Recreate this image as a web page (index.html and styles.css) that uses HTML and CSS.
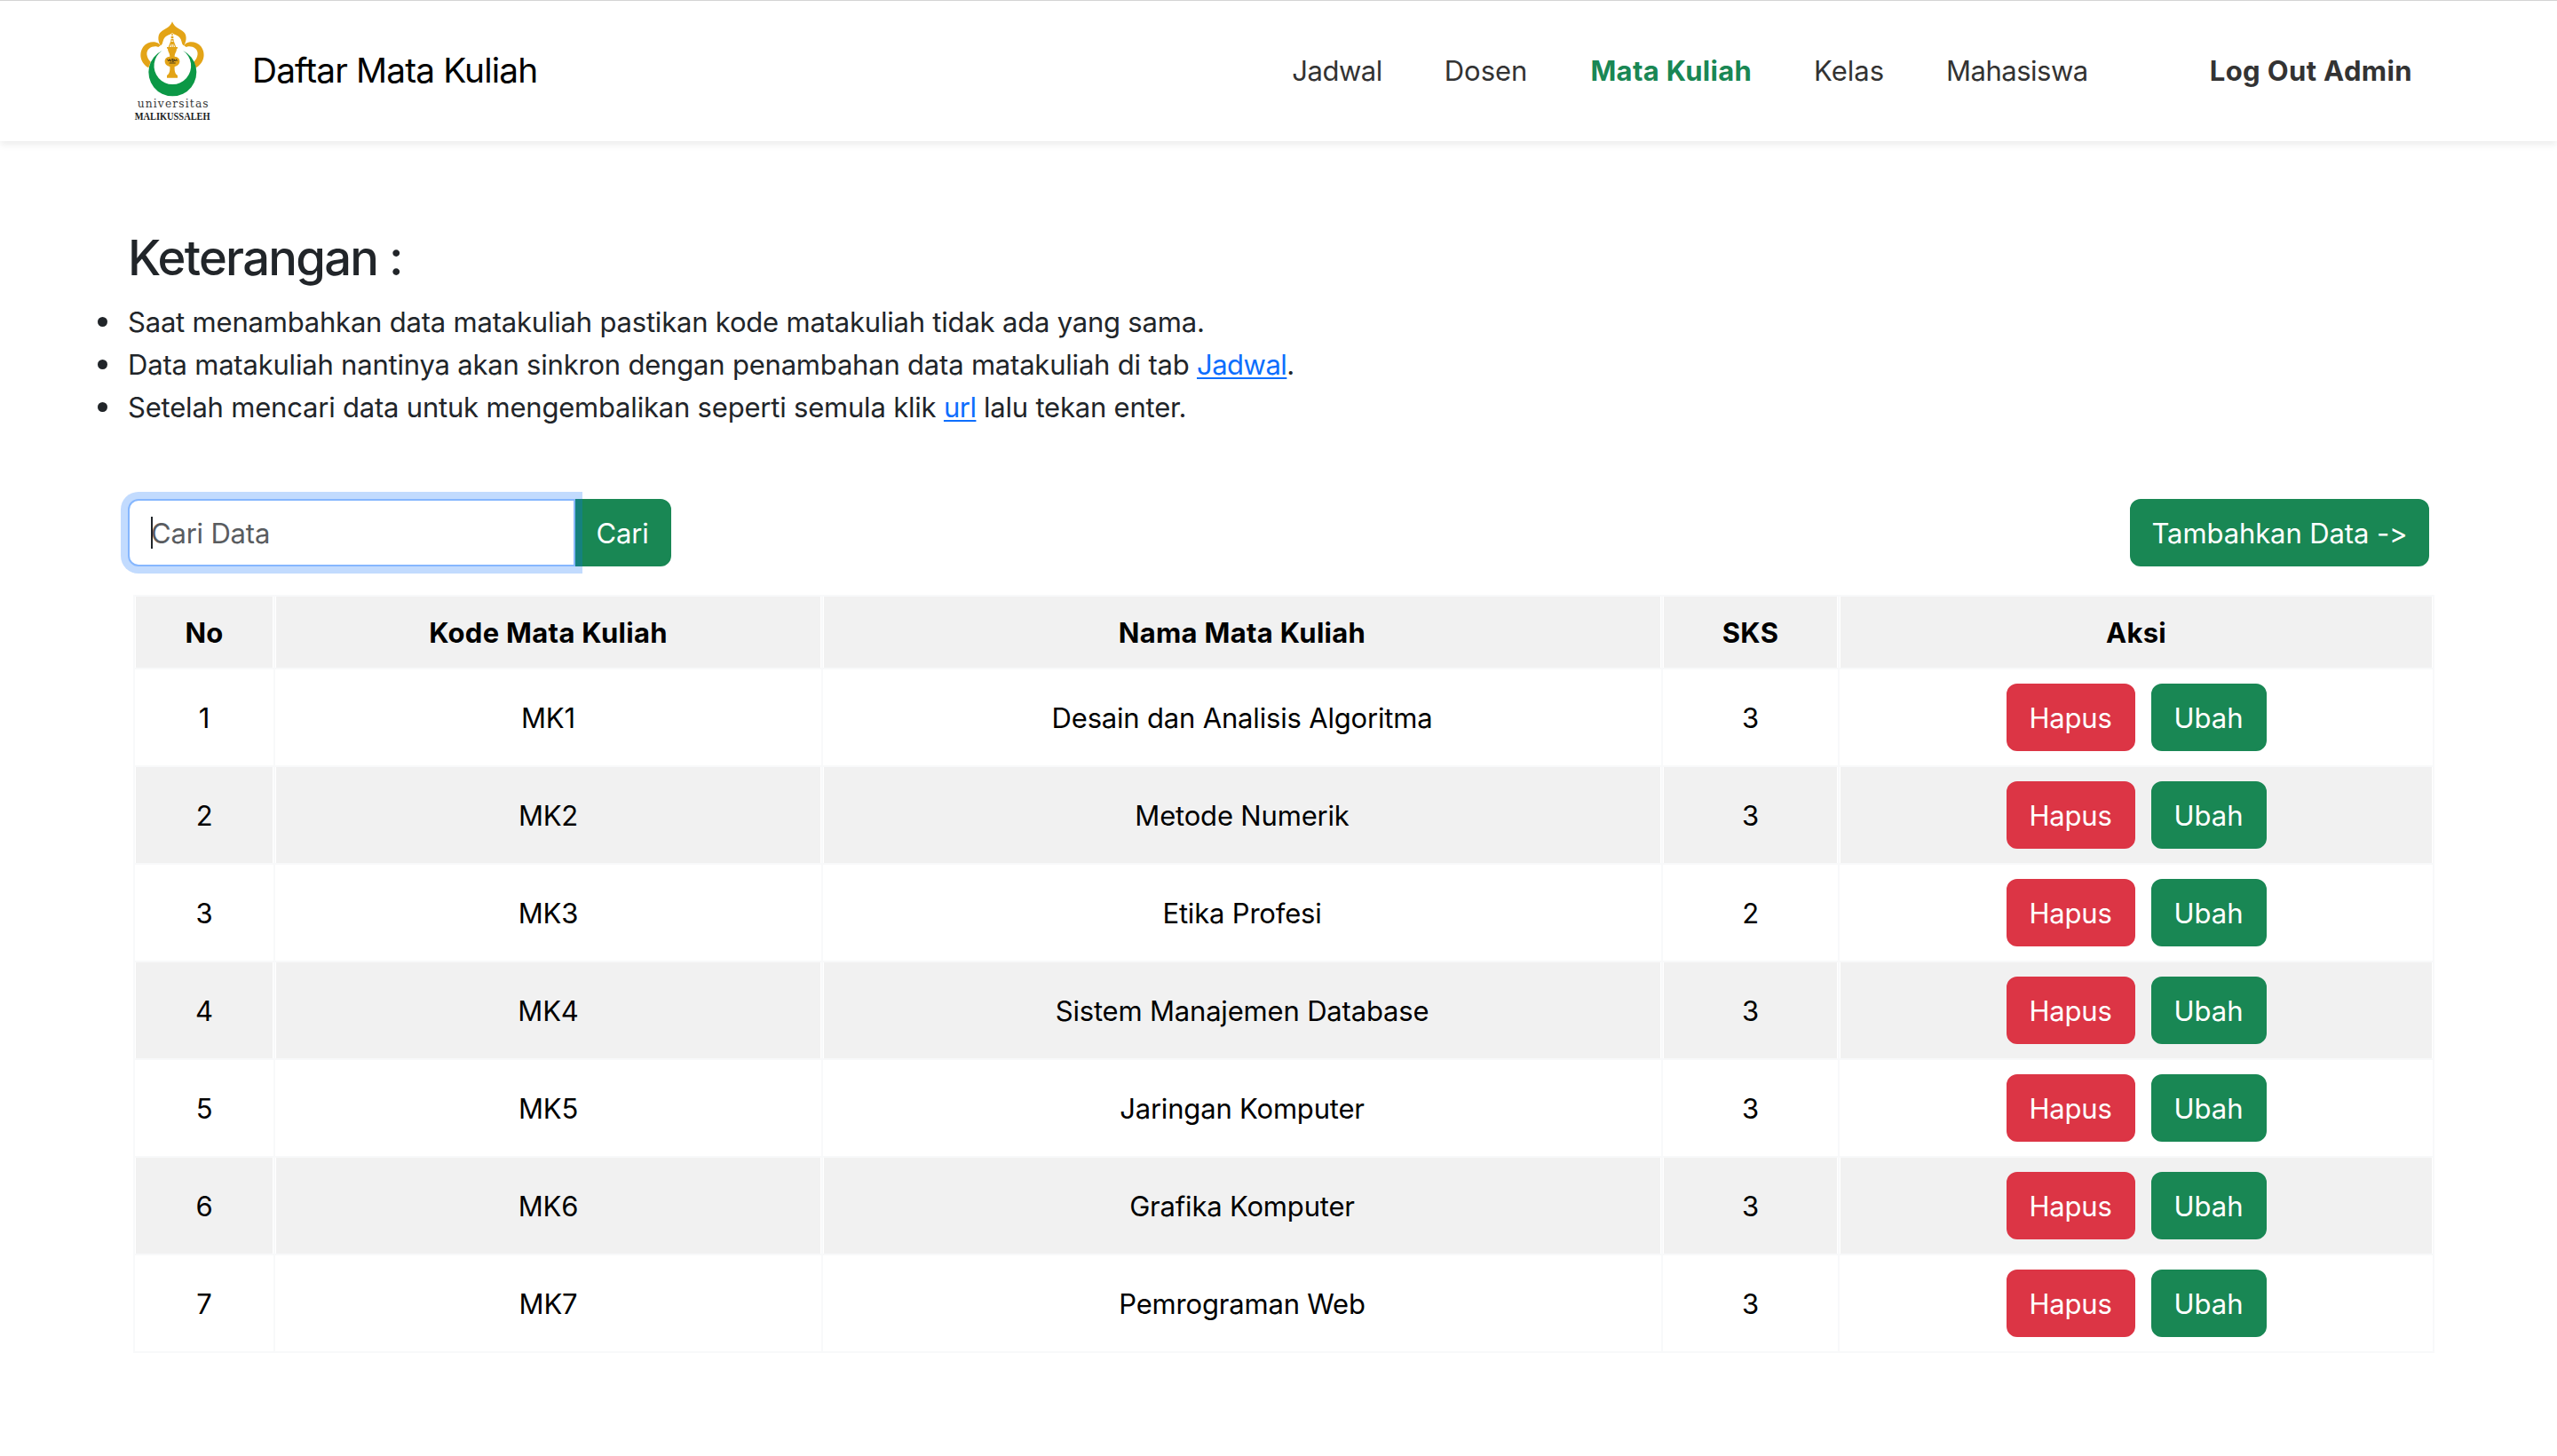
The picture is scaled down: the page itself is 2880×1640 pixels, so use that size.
FILE: index.html
```html
<!DOCTYPE html>
<html lang="id">
<head>
<meta charset="utf-8">
<title>Daftar Mata Kuliah</title>
<link rel="stylesheet" href="styles.css">
</head>
<body>
<header class="navbar">
  <svg class="logo" viewBox="0 0 330 390" role="img" aria-label="Universitas Malikussaleh">
    <g fill="#e3a417">
      <path d="M162 28C168 46 184 52 196 59C212 69 212 90 202 109C194 107 195 97 191 88C186 75 171 74 162 66C153 74 138 75 133 88C129 97 130 107 122 109C112 90 112 69 128 59C140 52 156 46 162 28Z"/>
      <path d="M122 109C116 94 82 90 65 112C45 140 58 172 82 184L89 164C74 149 72 128 84 119C94 110 109 110 115 114Z"/>
      <path d="M202 109C208 94 242 90 259 112C279 140 266 172 242 184L235 164C250 149 252 128 240 119C230 110 215 110 209 114Z"/>
      <path d="M160 68H164V76H160ZM158 78H166V84H158ZM158 86H166L168 96L175 114H180V119H177C177 130 170 134 170 146C182 147 187 154 187 162C187 172 179 178 170 180C169 196 172 205 180 210V218H144V210C152 205 155 196 154 180C145 178 137 172 137 162C137 154 142 147 154 146C154 134 147 130 147 119H144V114H149L156 96Z"/>
    </g>
    <path fill="#fff" d="M153 114L158 103V114ZM161 114V105H164V114ZM167 114V103L171 114ZM158 92H166V95H158Z"/>
    <path fill="none" stroke="#4c3c16" stroke-width="3" d="M145 155L150 162L153 155L157 163L160 155H165L162 163L168 162V155L172 162L176 155L178 162M152 168H173"/>
    <path fill="#0c9846" d="M128 126A81 81 0 1 0 198 126A62.5 62.5 0 1 1 128 126Z"/>
    <text class="logo-name" x="44" y="319" textLength="240">universitas</text>
    <text class="logo-place" x="35" y="361" textLength="255" lengthAdjust="spacingAndGlyphs">MALIKUSSALEH</text>
  </svg>
  <span class="brand">Daftar Mata Kuliah</span>
  <nav class="nav">
    <a class="tight">Jadwal</a>
    <a>Dosen</a>
    <a class="active">Mata Kuliah</a>
    <a>Kelas</a>
    <a class="tight">Mahasiswa</a>
    <a class="logout">Log Out Admin</a>
  </nav>
</header>
<main class="content">
  <h2 class="heading">Keterangan :</h2>
  <ul class="notes">
    <li>Saat menambahkan data matakuliah pastikan kode matakuliah tidak ada yang sama.</li>
    <li>Data matakuliah nantinya akan sinkron dengan penambahan data matakuliah di tab <a class="link">Jadwal</a>.</li>
    <li>Setelah mencari data untuk mengembalikan seperti semula klik <a class="link">url</a> lalu tekan enter.</li>
  </ul>
  <div class="toolbar">
    <form class="search">
      <input class="search-input" type="text" placeholder="Cari Data">
      <span class="caret"></span>
      <button class="btn btn-success search-btn" type="button">Cari</button>
    </form>
    <a class="btn btn-success add">Tambahkan Data -&gt;</a>
  </div>
  <table class="courses">
    <colgroup><col class="c-no"><col class="c-code"><col class="c-name"><col class="c-sks"><col class="c-action"></colgroup>
    <thead>
      <tr><th>No</th><th>Kode Mata Kuliah</th><th>Nama Mata Kuliah</th><th>SKS</th><th>Aksi</th></tr>
    </thead>
    <tbody>
      <tr><td>1</td><td>MK1</td><td>Desain dan Analisis Algoritma</td><td>3</td><td><div class="actions"><a class="btn btn-danger">Hapus</a><a class="btn btn-success edit">Ubah</a></div></td></tr>
      <tr><td>2</td><td>MK2</td><td>Metode Numerik</td><td>3</td><td><div class="actions"><a class="btn btn-danger">Hapus</a><a class="btn btn-success edit">Ubah</a></div></td></tr>
      <tr><td>3</td><td>MK3</td><td>Etika Profesi</td><td>2</td><td><div class="actions"><a class="btn btn-danger">Hapus</a><a class="btn btn-success edit">Ubah</a></div></td></tr>
      <tr><td>4</td><td>MK4</td><td>Sistem Manajemen Database</td><td>3</td><td><div class="actions"><a class="btn btn-danger">Hapus</a><a class="btn btn-success edit">Ubah</a></div></td></tr>
      <tr><td>5</td><td>MK5</td><td>Jaringan Komputer</td><td>3</td><td><div class="actions"><a class="btn btn-danger">Hapus</a><a class="btn btn-success edit">Ubah</a></div></td></tr>
      <tr><td>6</td><td>MK6</td><td>Grafika Komputer</td><td>3</td><td><div class="actions"><a class="btn btn-danger">Hapus</a><a class="btn btn-success edit">Ubah</a></div></td></tr>
      <tr><td>7</td><td>MK7</td><td>Pemrograman Web</td><td>3</td><td><div class="actions"><a class="btn btn-danger">Hapus</a><a class="btn btn-success edit">Ubah</a></div></td></tr>
    </tbody>
  </table>
</main>
</body>
</html>
```
FILE: styles.css
```css
* { box-sizing: border-box; }

body {
  margin: 0;
  background: #fff;
  color: #212529;
  font: 400 31px/48px "Inter", "Liberation Sans", sans-serif;
  font-variant-ligatures: none;
  font-feature-settings: "calt" 0;
  letter-spacing: -0.2px;
}

/* Top bar */
.navbar {
  display: flex;
  align-items: center;
  height: 159px;
  padding: 0 163px 1px 140px;
  border-top: 1px solid #d4d4d4;
  background: #fff;
  box-shadow: 0 4px 8px rgba(0, 0, 0, .075);
}
.logo { width: 110px; height: 130px; flex: none; overflow: visible; }
.logo-name { font: 37px "DejaVu Serif", serif; fill: #3a3a3a; letter-spacing: 0; }
.logo-place { font: bold 39px "Liberation Serif", serif; fill: #1c1c1c; letter-spacing: 0; }
.brand {
  margin: 0 0 2px 34px;
  color: #000;
  font-size: 38.8px;
  letter-spacing: -.85px;
}
.nav {
  display: flex;
  gap: 70px;
  margin-left: auto;
  color: #333;
  letter-spacing: 0;
}
.nav .tight { letter-spacing: -.5px; }
.nav .active { margin-left: 1px; color: #198754; font-weight: 700; letter-spacing: .3px; }
.nav .logout { margin-left: 67px; font-weight: 700; letter-spacing: .38px; }

/* Page body */
.content { padding: 98px 144px 0; }
.heading {
  margin: 0 0 15px;
  font-size: 54.3px;
  font-weight: 500;
  line-height: 67px;
  letter-spacing: -1.7px;
}
.notes { margin: 0; padding: 0; list-style: none; }
.notes li::before {
  content: "";
  display: inline-block;
  width: 11px;
  height: 11px;
  margin: 0 23px 0 -34px;
  border-radius: 50%;
  background: #212529;
  vertical-align: 6px;
}
.link {
  color: #0d6efd;
  letter-spacing: -.5px;
  text-decoration: underline;
  text-decoration-thickness: 2px;
  text-underline-offset: 3px;
  text-decoration-skip-ink: none;
}

.toolbar {
  display: flex;
  justify-content: space-between;
  margin: 79px 0 32px;
}
.search { position: relative; display: flex; }
.search-input {
  position: relative;
  z-index: 1;
  width: 504px;
  height: 76px;
  padding: 12px 24px;
  border: 2px solid #86b7fe;
  border-radius: 12px 0 0 12px;
  outline: 0;
  background: #fff;
  box-shadow: 0 0 0 8px rgba(13, 110, 253, .25);
  font: inherit;
  letter-spacing: -.2px;
}
.search-input::placeholder { color: #595c5f; opacity: 1; }
.caret {
  position: absolute;
  z-index: 2;
  top: 20px;
  left: 26px;
  width: 2px;
  height: 36px;
  background: #212529;
}
.btn {
  display: block;
  height: 76px;
  padding: 13px 0 11px;
  border: 2px solid transparent;
  border-radius: 12px;
  color: #fff;
  font: inherit;
  letter-spacing: -.2px;
  text-align: center;
}
.btn-success { border-color: #198754; background-color: #198754; }
.btn-danger { width: 145px; border-color: #dc3545; background-color: #dc3545; }
.search-btn { width: 110px; margin-left: -2px; border-radius: 0 12px 12px 0; }
.add { width: 337px; letter-spacing: -.1px; }
.edit { width: 130px; letter-spacing: 0; }

/* Course table */
.courses {
  width: 2592px;
  margin-left: 6px;
  border: solid #f8f9fa;
  border-width: 2px 0 0 2px;
  border-spacing: 0;
  table-layout: fixed;
  color: #000;
  text-align: center;
}
.c-no { width: 158px; }
.c-code { width: 617px; }
.c-name { width: 946px; }
.c-sks { width: 199px; }
.c-action { width: 670px; }
.courses th,
.courses td {
  padding: 17px 0 15px;
  border: solid #f8f9fa;
  border-width: 0 2px 2px 0;
  vertical-align: middle;
}
.courses td:last-child { padding: 16px 0; }
.courses th { font-weight: 700; letter-spacing: .3px; }
.courses td { letter-spacing: -.18px; }
.courses th,
.courses tbody tr:nth-child(even) td {
  background: #f1f1f1;
  box-shadow: inset 1px 0 #fff, inset -1px 0 #fff;
}
.actions { display: flex; justify-content: center; gap: 18px; }
```
